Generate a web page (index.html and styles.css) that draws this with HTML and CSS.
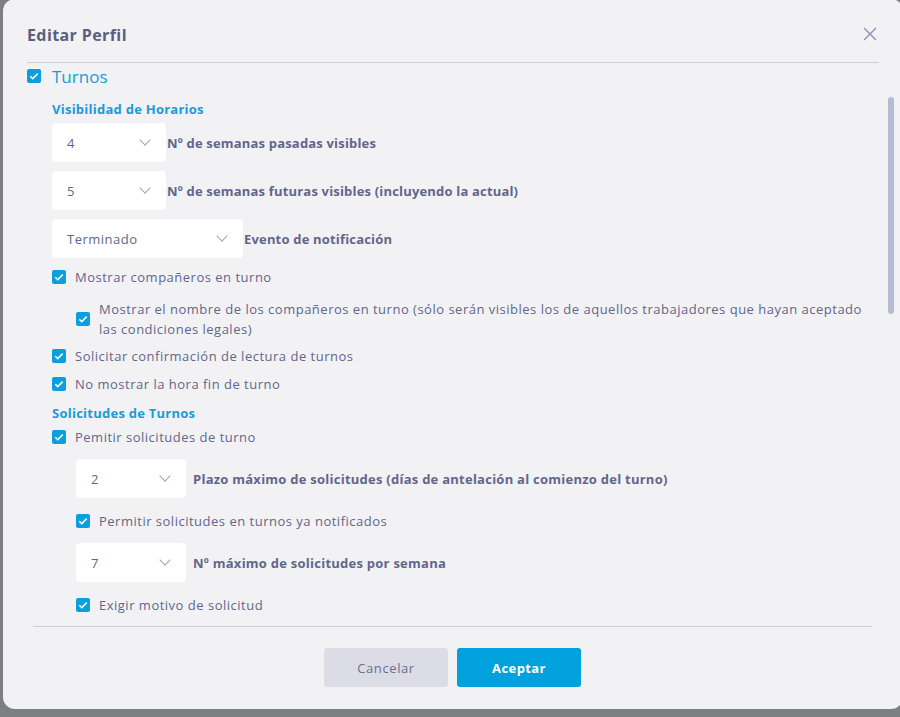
FILE: index.html
```html
<!DOCTYPE html>
<html>
  <head>
    <meta charset="utf-8" />
    <meta name="viewport" content="width=device-width, initial-scale=1" />
    <title>Editar Perfil</title>
    <link rel="stylesheet" href="styles.css">
  </head>

  <body>
    <div class="dialog">
      <div class="dialog-header">
        <h2>Editar Perfil</h2>
        <button type="button" class="close" aria-label="Cerrar">
          <svg width="14" height="14" viewBox="0 0 14 14"><path d="M1 1L13 13M13 1L1 13" stroke="#8b90b3" stroke-width="1.4" fill="none"/></svg>
        </button>
      </div>

      <label class="section-title">
        <span class="check"><svg viewBox="0 0 14 14"><path d="M3.3 7.2l2.4 2.4 5-5" /></svg></span>
        Turnos
      </label>

      <div class="dialog-body">
        <h3 class="subtitle">Visibilidad de Horarios</h3>

        <div class="field first">
          <div class="select"><span>4</span><i class="chevron"></i></div>
          <span class="field-label">Nº de semanas pasadas visibles</span>
        </div>
        <div class="field">
          <div class="select"><span>5</span><i class="chevron"></i></div>
          <span class="field-label">Nº de semanas futuras visibles (incluyendo la actual)</span>
        </div>
        <div class="field">
          <div class="select wide"><span>Terminado</span><i class="chevron"></i></div>
          <span class="field-label">Evento de notificación</span>
        </div>

        <label class="option after-select">
          <span class="check"><svg viewBox="0 0 14 14"><path d="M3.3 7.2l2.4 2.4 5-5" /></svg></span>
          <span>Mostrar compañeros en turno</span>
        </label>
        <label class="option nested multi">
          <span class="check"><svg viewBox="0 0 14 14"><path d="M3.3 7.2l2.4 2.4 5-5" /></svg></span>
          <span>Mostrar el nombre de los compañeros en turno (sólo serán visibles los de aquellos trabajadores que hayan aceptado las condiciones legales)</span>
        </label>
        <label class="option">
          <span class="check"><svg viewBox="0 0 14 14"><path d="M3.3 7.2l2.4 2.4 5-5" /></svg></span>
          <span>Solicitar confirmación de lectura de turnos</span>
        </label>
        <label class="option">
          <span class="check"><svg viewBox="0 0 14 14"><path d="M3.3 7.2l2.4 2.4 5-5" /></svg></span>
          <span>No mostrar la hora fin de turno</span>
        </label>

        <h3 class="subtitle second">Solicitudes de Turnos</h3>

        <label class="option tight">
          <span class="check"><svg viewBox="0 0 14 14"><path d="M3.3 7.2l2.4 2.4 5-5" /></svg></span>
          <span>Pemitir solicitudes de turno</span>
        </label>
        <div class="field nested after-option">
          <div class="select small"><span>2</span><i class="chevron"></i></div>
          <span class="field-label">Plazo máximo de solicitudes (días de antelación al comienzo del turno)</span>
        </div>
        <label class="option nested after-field">
          <span class="check"><svg viewBox="0 0 14 14"><path d="M3.3 7.2l2.4 2.4 5-5" /></svg></span>
          <span>Permitir solicitudes en turnos ya notificados</span>
        </label>
        <div class="field nested after-option">
          <div class="select small"><span>7</span><i class="chevron"></i></div>
          <span class="field-label">Nº máximo de solicitudes por semana</span>
        </div>
        <label class="option nested after-field">
          <span class="check"><svg viewBox="0 0 14 14"><path d="M3.3 7.2l2.4 2.4 5-5" /></svg></span>
          <span>Exigir motivo de solicitud</span>
        </label>
      </div>

      <div class="scroll-thumb"></div>

      <div class="dialog-footer">
        <button type="button" class="btn btn-cancel">Cancelar</button>
        <button type="button" class="btn btn-ok">Aceptar</button>
      </div>
    </div>
  </body>
</html>
```

FILE: styles.css
```css
html,
body {
  margin: 0;
  height: 100%;
  overflow: hidden;
}

body {
  background-color: #7d8083;
  font-family: "Open Sans", "Noto Sans", sans-serif;
  color: #62668a;
  letter-spacing: 0.5px;
}

.dialog {
  position: absolute;
  left: 3px;
  top: -1px;
  width: 900px;
  height: 710px;
  background-color: #f2f2f5;
  border-radius: 12px;
  box-sizing: border-box;
  padding: 0 24px;
}

.dialog-header {
  display: flex;
  align-items: center;
  justify-content: space-between;
  height: 64px;
  border-bottom: 1px solid #cfcde1;
  box-sizing: border-box;
}

.dialog-header h2 {
  margin: 0;
  padding-top: 8px;
  font-size: 16px;
  font-weight: 700;
  letter-spacing: 0.4px;
  color: #5b5f7e;
}

.close {
  border: 0;
  background: none;
  padding: 0;
  margin: 6px 2px 0 0;
  width: 14px;
  height: 14px;
  cursor: pointer;
}

.close svg {
  display: block;
}

.check {
  flex: 0 0 auto;
  width: 14px;
  height: 14px;
  border-radius: 2px;
  background-color: #0ba0dd;
  display: inline-block;
}

.check svg {
  display: block;
  width: 14px;
  height: 14px;
}

.check path {
  fill: none;
  stroke: #fff;
  stroke-width: 1.5;
}

.section-title {
  display: flex;
  align-items: center;
  gap: 11px;
  height: 26px;
  font-size: 17px;
  letter-spacing: 0;
  color: #1a9bd7;
}

.dialog-body {
  height: 537px;
  overflow: hidden;
  padding-left: 25px;
  padding-top: 10px;
  box-sizing: border-box;
}

.subtitle {
  margin: 0;
  font-size: 13px;
  line-height: 20px;
  font-weight: 700;
  letter-spacing: 0.25px;
  color: #1a9bd7;
}

.subtitle.second {
  margin-top: 9px;
}

.field {
  display: flex;
  align-items: center;
  margin-top: 9px;
}

.field.first {
  margin-top: 4px;
}

.select {
  width: 114px;
  height: 39px;
  background-color: #fff;
  border-radius: 4px;
  display: flex;
  align-items: center;
  justify-content: space-between;
  padding: 0 17px 0 15px;
  box-sizing: border-box;
  font-size: 13px;
  color: #62668a;
}

.select.wide {
  width: 191px;
}

.select.small {
  width: 110px;
}

.chevron {
  width: 7px;
  height: 7px;
  border-right: 1px solid #9ea3bf;
  border-bottom: 1px solid #9ea3bf;
  transform: rotate(45deg);
  margin-top: -5px;
}

.field-label {
  font-size: 13px;
  font-weight: 700;
  letter-spacing: 0.18px;
  color: #62668a;
  padding-left: 1px;
}

.field.nested .field-label {
  padding-left: 7px;
  letter-spacing: 0.25px;
}

.option {
  display: flex;
  align-items: center;
  gap: 9px;
  font-size: 13px;
  line-height: 20px;
  margin-top: 8px;
}

.option.after-select {
  margin-top: 9px;
}

.option.multi {
  margin-top: 12px;
  margin-bottom: -1px;
}

.option.tight {
  margin-top: 4px;
}

.nested {
  margin-left: 24px;
}

.field.after-option {
  margin-top: 12px;
}

.option.after-field {
  margin-top: 13px;
}

.scroll-thumb {
  position: absolute;
  left: 885px;
  top: 98px;
  width: 6px;
  height: 217px;
  border-radius: 3px;
  background-color: #b5bad5;
}

.dialog-footer {
  margin: 0 7px 0 6px;
  border-top: 1px solid #cfcde1;
  padding-top: 21px;
  display: flex;
  justify-content: center;
  gap: 9px;
}

.btn {
  width: 124px;
  height: 39px;
  border: 0;
  border-radius: 3px;
  font-family: inherit;
  font-size: 13px;
  letter-spacing: 0.6px;
  cursor: pointer;
}

.btn-cancel {
  background-color: #dcdce6;
  color: #6b6f88;
}

.btn-ok {
  background-color: #00a1dd;
  color: #fff;
  font-weight: 700;
  letter-spacing: 0.4px;
}
```
